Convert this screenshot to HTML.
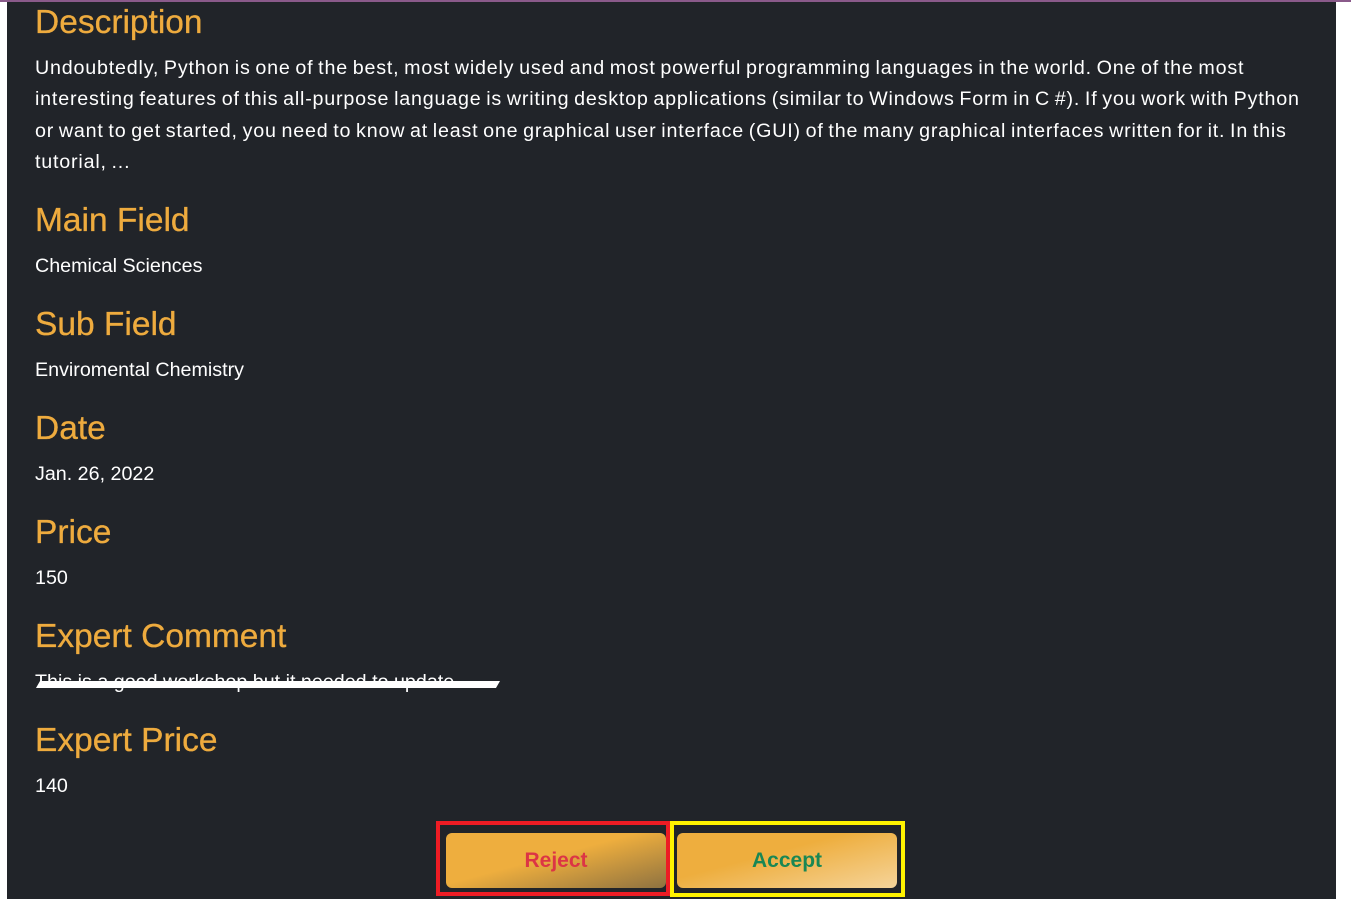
<!DOCTYPE html>
<html><head><meta charset="utf-8"><style>
body{margin:0;width:1351px;height:899px;background:#fff;overflow:hidden;font-family:"Liberation Sans",sans-serif;position:relative}
.top{position:absolute;left:0;top:0;width:1351px;height:2px;background:#8a5a8a}
.panel{position:absolute;left:7px;top:2px;width:1329px;height:897px;background:#212429}
.h{position:absolute;left:35px;color:#eeab3e;font-size:33.5px;line-height:36px;white-space:nowrap;-webkit-text-stroke:0.3px #eeab3e}
.t{position:absolute;left:35px;color:#fff;font-size:19.7px;line-height:31.3px;width:1300px;white-space:nowrap}
.strike{position:absolute;left:38px;top:681px;width:460px;height:7px;background:#fff;transform:skewX(-30deg)}
.box{position:absolute;box-sizing:border-box}
.btn{position:absolute;border-radius:6px;font-weight:bold;font-size:21px;text-align:center;line-height:55px}
</style></head><body>
<div class="top"></div>
<div class="panel"></div>
<div class="h" style="top:5px">Description</div>
<div class="t" style="top:53px;letter-spacing:0.8px;word-spacing:-1.5px">Undoubtedly, Python is one of the best, most widely used and most powerful programming languages in the world. One of the most<br>interesting features of this all-purpose language is writing desktop applications (similar to Windows Form in C #). If you work with Python<br>or want to get started, you need to know at least one graphical user interface (GUI) of the many graphical interfaces written for it. In this<br>tutorial, ...</div>
<div class="h" style="top:203px">Main Field</div>
<div class="t" style="top:251px">Chemical Sciences</div>
<div class="h" style="top:307px">Sub Field</div>
<div class="t" style="top:355px">Enviromental Chemistry</div>
<div class="h" style="top:411px">Date</div>
<div class="t" style="top:459px">Jan. 26, 2022</div>
<div class="h" style="top:515px">Price</div>
<div class="t" style="top:563px">150</div>
<div class="h" style="top:619px">Expert Comment</div>
<div class="t" style="top:667px">This is a good workshop but it needed to update</div>
<div class="strike"></div>
<div class="h" style="top:723px">Expert Price</div>
<div class="t" style="top:771px">140</div>
<div class="box" style="left:436px;top:821px;width:234px;height:75px;border:4px solid #ed1c24"></div>
<div class="box" style="left:670px;top:821px;width:235px;height:76px;border:4px solid #fff200"></div>
<div class="btn" style="left:446px;top:833px;width:220px;height:55px;background:linear-gradient(165deg,#eeae3e 0%,#eeae3e 45%,#8e7240 100%);color:#dc3545">Reject</div>
<div class="btn" style="left:677px;top:833px;width:220px;height:55px;background:linear-gradient(165deg,#eeae3e 0%,#eeae3e 40%,#f5d49a 100%);color:#198754">Accept</div>
</body></html>
